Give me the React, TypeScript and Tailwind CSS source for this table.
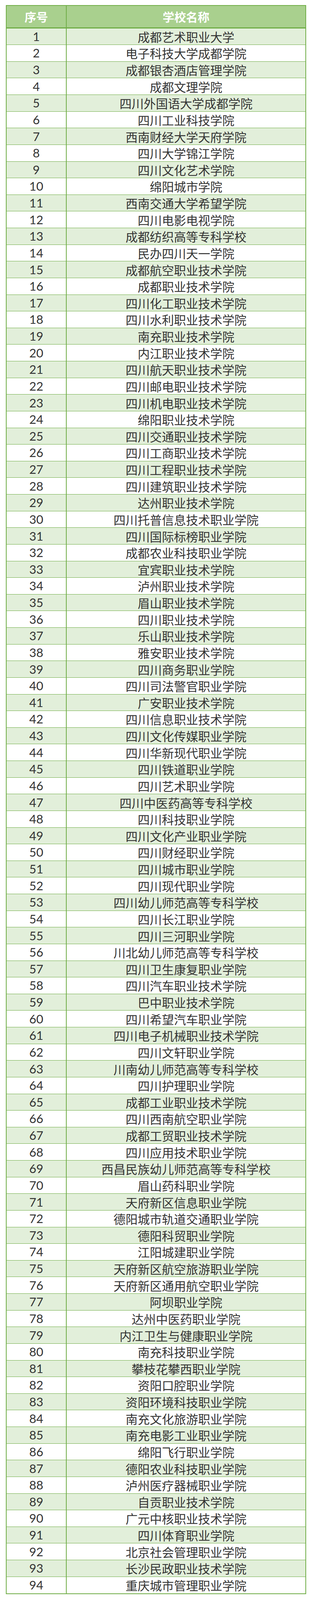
import React from "react";

const names: string[] = [
  "成都艺术职业大学",
  "电子科技大学成都学院",
  "成都银杏酒店管理学院",
  "成都文理学院",
  "四川外国语大学成都学院",
  "四川工业科技学院",
  "西南财经大学天府学院",
  "四川大学锦江学院",
  "四川文化艺术学院",
  "绵阳城市学院",
  "西南交通大学希望学院",
  "四川电影电视学院",
  "成都纺织高等专科学校",
  "民办四川天一学院",
  "成都航空职业技术学院",
  "成都职业技术学院",
  "四川化工职业技术学院",
  "四川水利职业技术学院",
  "南充职业技术学院",
  "内江职业技术学院",
  "四川航天职业技术学院",
  "四川邮电职业技术学院",
  "四川机电职业技术学院",
  "绵阳职业技术学院",
  "四川交通职业技术学院",
  "四川工商职业技术学院",
  "四川工程职业技术学院",
  "四川建筑职业技术学院",
  "达州职业技术学院",
  "四川托普信息技术职业学院",
  "四川国际标榜职业学院",
  "成都农业科技职业学院",
  "宜宾职业技术学院",
  "泸州职业技术学院",
  "眉山职业技术学院",
  "四川职业技术学院",
  "乐山职业技术学院",
  "雅安职业技术学院",
  "四川商务职业学院",
  "四川司法警官职业学院",
  "广安职业技术学院",
  "四川信息职业技术学院",
  "四川文化传媒职业学院",
  "四川华新现代职业学院",
  "四川铁道职业学院",
  "四川艺术职业学院",
  "四川中医药高等专科学校",
  "四川科技职业学院",
  "四川文化产业职业学院",
  "四川财经职业学院",
  "四川城市职业学院",
  "四川现代职业学院",
  "四川幼儿师范高等专科学校",
  "四川长江职业学院",
  "四川三河职业学院",
  "川北幼儿师范高等专科学校",
  "四川卫生康复职业学院",
  "四川汽车职业技术学院",
  "巴中职业技术学院",
  "四川希望汽车职业学院",
  "四川电子机械职业技术学院",
  "四川文轩职业学院",
  "川南幼儿师范高等专科学校",
  "四川护理职业学院",
  "成都工业职业技术学院",
  "四川西南航空职业学院",
  "成都工贸职业技术学院",
  "四川应用技术职业学院",
  "西昌民族幼儿师范高等专科学校",
  "眉山药科职业学院",
  "天府新区信息职业学院",
  "德阳城市轨道交通职业学院",
  "德阳科贸职业学院",
  "江阳城建职业学院",
  "天府新区航空旅游职业学院",
  "天府新区通用航空职业学院",
  "阿坝职业学院",
  "达州中医药职业学院",
  "内江卫生与健康职业学院",
  "南充科技职业学院",
  "攀枝花攀西职业学院",
  "资阳口腔职业学院",
  "资阳环境科技职业学院",
  "南充文化旅游职业学院",
  "南充电影工业职业学院",
  "绵阳飞行职业学院",
  "德阳农业科技职业学院",
  "泸州医疗器械职业学院",
  "自贡职业技术学院",
  "广元中核职业技术学院",
  "四川体育职业学院",
  "北京社会管理职业学院",
  "长沙民政职业技术学院",
  "重庆城市管理职业学院",
];

export default function App() {
  return (
    <div
      className="w-[800px] bg-white pt-[13px] pb-[14px] px-[15px]"
      style={{ fontFamily: "Lato, 'Noto Sans CJK SC', sans-serif" }}
    >
      <div className="border-2 border-[#70ad47] flex flex-col">
        <div className="flex h-[57.5px] bg-[#a9d08e] border-b-[3px] border-[#70ad47] text-white font-bold text-[30px] leading-none">
          <div
            className="w-[154px] shrink-0 border-r-2 border-[#70ad47] flex items-center justify-center"
            style={{ fontFamily: "'Noto Sans CJK SC', sans-serif" }}
          >
            序号
          </div>
          <div
            className="flex-1 flex items-center justify-center"
            style={{ fontFamily: "'Noto Sans CJK SC', sans-serif" }}
          >
            学校名称
          </div>
        </div>
        {names.map((n, i) => (
          <div
            key={i}
            className={
              "flex h-[42.63px] shrink-0 text-[#333333] text-[31px] leading-none " +
              (i % 2 === 0 ? "bg-[#e2efda] " : "bg-white ") +
              (i === names.length - 1 ? "" : "border-b border-[#70ad47]")
            }
          >
            <div className="w-[154px] shrink-0 border-r-2 border-[#70ad47] flex items-center justify-center">
              {i + 1}
            </div>
            <div
              className="flex-1 flex items-center justify-center"
              style={{ fontFamily: "'Noto Sans CJK SC', sans-serif" }}
            >
              {n}
            </div>
          </div>
        ))}
      </div>
    </div>
  );
}
